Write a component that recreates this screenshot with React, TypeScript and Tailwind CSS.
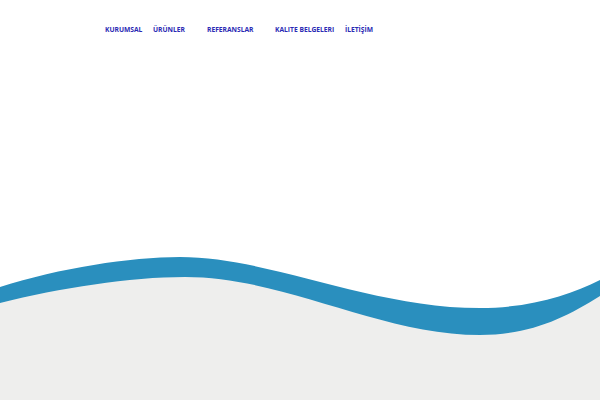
import React from "react";

const items: { label: string; w: string }[] = [
  { label: "KURUMSAL", w: "w-[48px]" },
  { label: "ÜRÜNLER", w: "w-[54px]" },
  { label: "REFERANSLAR", w: "w-[68px]" },
  { label: "KALITE BELGELERI", w: "w-[70px]" },
  { label: "İLETİŞİM", w: "w-[40px]" },
];

export default function App() {
  return (
    <div className="w-[600px] h-[400px] bg-white flex flex-col overflow-hidden" style={{ fontFamily: '"Open Sans", "Noto Sans", sans-serif' }}>
      <nav className="flex pl-[105px] pt-[23.5px] h-[40px]">
        {items.map((it) => (
          <a key={it.label} className={`${it.w} shrink-0 whitespace-nowrap text-[6.7px] leading-[12px] font-bold text-[#2a2ab4]`}>
            {it.label}
          </a>
        ))}
      </nav>
      <div className="flex-1" />
      <svg className="block w-[600px] h-[160px] shrink-0" viewBox="0 240 600 160" preserveAspectRatio="none">
        <path
          d="M0,287 C60,268 130,257 180,257 C270,257 370,308 480,308 C530,308 570,295 600,280 L600,400 L0,400 Z"
          fill="#2a8fbe"
        />
        <path
          d="M0,303 C60,288 130,277 185,277 C285,277 380,335 480,335 C530,335 565,318 600,296 L600,400 L0,400 Z"
          fill="#eeeeed"
        />
      </svg>
    </div>
  );
}
